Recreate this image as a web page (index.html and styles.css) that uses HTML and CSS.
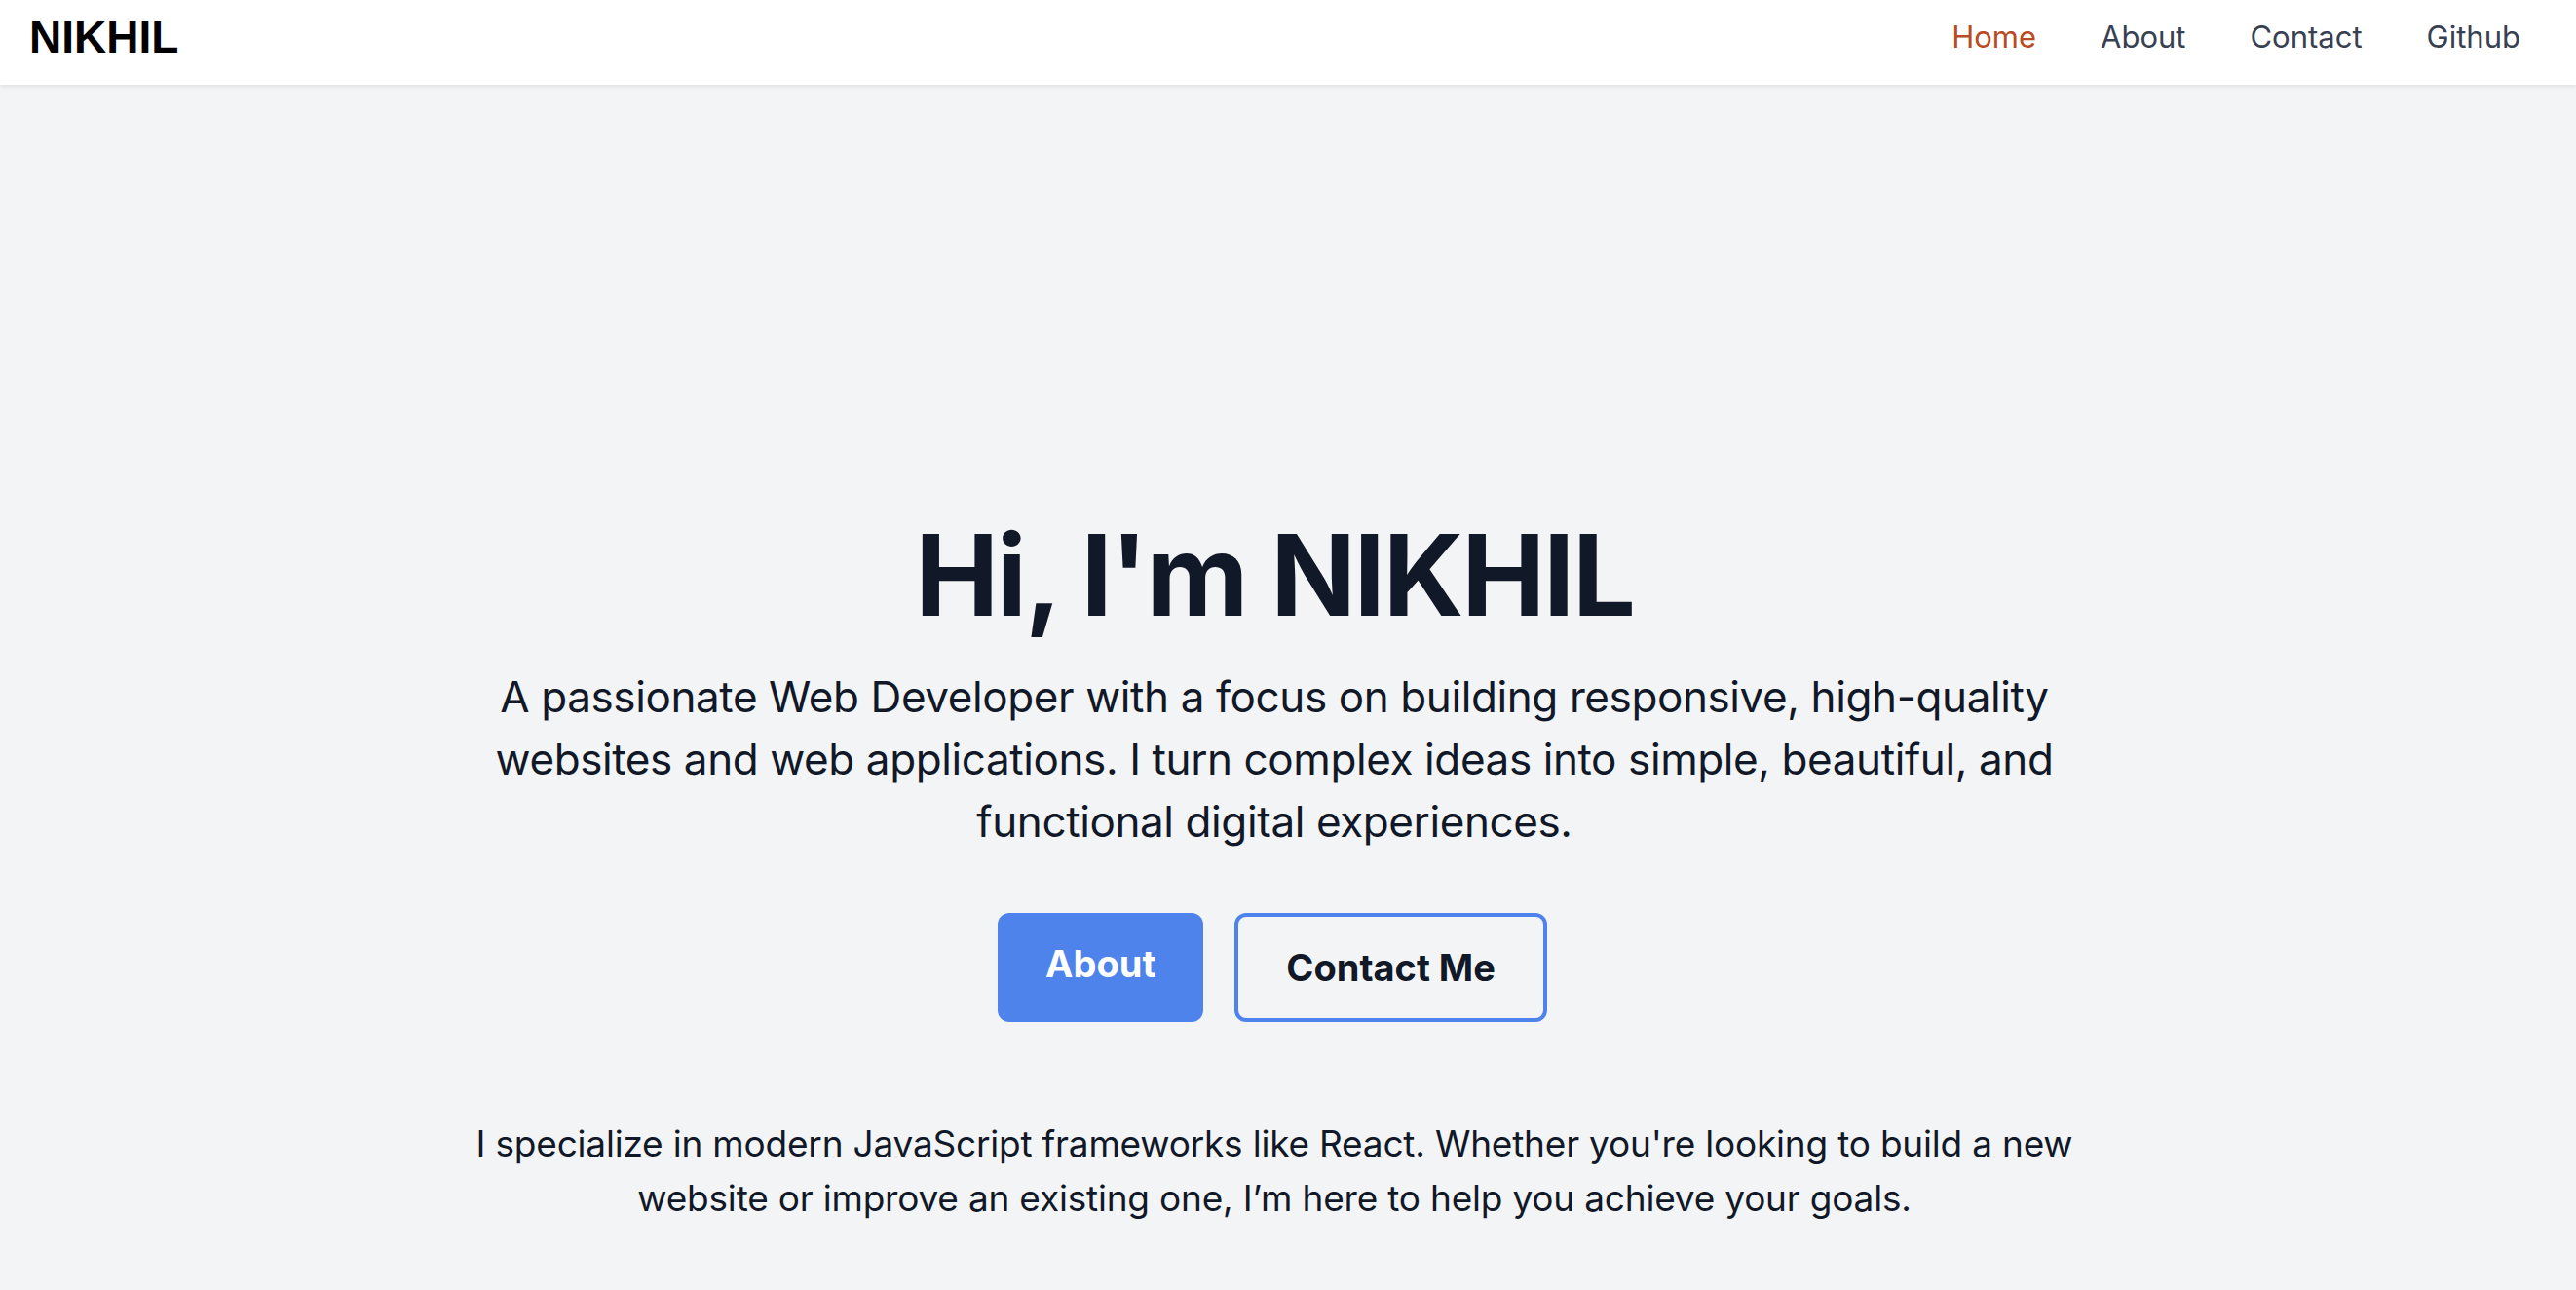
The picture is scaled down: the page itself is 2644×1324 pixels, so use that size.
FILE: index.html
```html
<!DOCTYPE html>
<html lang="en">
<head>
<meta charset="utf-8">
<title>NIKHIL</title>
<link rel="stylesheet" href="styles.css">
</head>
<body>
<header class="topbar">
  <div class="logo">NIKHIL</div>
  <nav class="nav">
    <a class="nav-link active" href="#">Home</a>
    <a class="nav-link" href="#">About</a>
    <a class="nav-link" href="#">Contact</a>
    <a class="nav-link" href="#">Github</a>
  </nav>
</header>
<main class="hero">
  <h1 class="title">Hi, I'm NIKHIL</h1>
  <p class="lead">A passionate Web Developer with a focus on building responsive, high-quality websites and web applications. I turn complex ideas into simple, beautiful, and functional digital experiences.</p>
  <div class="actions">
    <a class="btn btn-primary" href="#">About</a>
    <a class="btn btn-outline" href="#">Contact Me</a>
  </div>
  <p class="note">I specialize in modern JavaScript frameworks like React. Whether you're looking to build a new website or improve an existing one, I’m here to help you achieve your goals.</p>
</main>
</body>
</html>
```
FILE: styles.css
```css
html, body {
  margin: 0;
  padding: 0;
}
body {
  background: #f3f4f6;
  font-family: Inter, "Noto Sans", sans-serif;
  color: #111827;
  min-height: 1324px;
}
.topbar {
  display: flex;
  align-items: center;
  justify-content: space-between;
  height: 87px;
  box-sizing: border-box;
  padding: 0 57px 11px 30px;
  background: #ffffff;
  box-shadow: 0 2px 4px rgba(0, 0, 0, 0.08);
}
.logo {
  font-family: "Liberation Sans", Arial, sans-serif;
  font-weight: 700;
  font-size: 46px;
  line-height: 52px;
  color: #000000;
}
.nav {
  display: flex;
  gap: 66px;
}
.nav-link {
  font-size: 31px;
  line-height: 40px;
  color: #374151;
  text-decoration: none;
}
.nav-link.active {
  color: #b94a22;
}
.hero {
  display: flex;
  flex-direction: column;
  align-items: center;
  padding: 446px 28px 0 0;
}
.title {
  margin: 0;
  font-size: 115px;
  line-height: 116px;
  font-weight: 700;
  letter-spacing: -2.2px;
  color: #111827;
}
.lead {
  margin: 34px 0 0;
  max-width: 1660px;
  text-align: center;
  font-size: 44px;
  line-height: 64px;
  letter-spacing: -0.4px;
  color: #111827;
}
.actions {
  display: flex;
  gap: 32px;
  margin-top: 62px;
  margin-right: 4px;
}
.btn {
  display: block;
  box-sizing: border-box;
  height: 112px;
  border-radius: 12px;
  font-size: 38px;
  line-height: 56px;
  font-weight: 700;
  text-decoration: none;
}
.btn-primary {
  background: #4f83ec;
  color: #ffffff;
  padding: 24px 49px 32px;
}
.btn-outline {
  border: 4px solid #4f83ec;
  color: #111827;
  padding: 24px 49px;
}
.note {
  margin: 97px 0 0;
  max-width: 1720px;
  text-align: center;
  font-size: 37px;
  line-height: 56px;
  letter-spacing: -0.2px;
  color: #111827;
}
```
